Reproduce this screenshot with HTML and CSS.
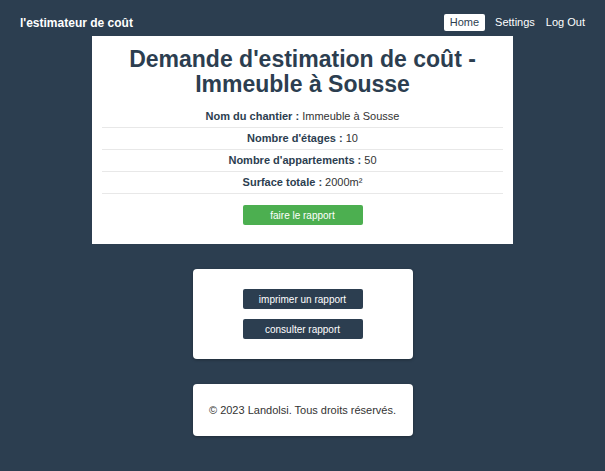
FILE: index.html
```html
<!DOCTYPE html>
<html lang="fr">
<head>
<meta charset="utf-8">
<title>l'estimateur de coût</title>
<link rel="stylesheet" href="styles.css">
</head>
<body>
<header class="navbar">
  <div class="brand">l'estimateur de coût</div>
  <nav class="nav">
    <a class="nav-link active" href="#">Home</a>
    <a class="nav-link" href="#">Settings</a>
    <a class="nav-link" href="#">Log Out</a>
  </nav>
</header>
<main class="content">
  <section class="card main-card">
    <h1 class="title">Demande d'estimation de coût - Immeuble à Sousse</h1>
    <ul class="details">
      <li class="row"><strong>Nom du chantier :</strong> Immeuble à Sousse</li>
      <li class="row"><strong>Nombre d'étages :</strong> 10</li>
      <li class="row"><strong>Nombre d'appartements :</strong> 50</li>
      <li class="row"><strong>Surface totale :</strong> 2000m²</li>
    </ul>
    <button class="btn btn-green">faire le rapport</button>
  </section>
  <section class="card small-card actions">
    <button class="btn btn-dark">imprimer un rapport</button>
    <button class="btn btn-dark">consulter rapport</button>
  </section>
  <footer class="card small-card footer">© 2023 Landolsi. Tous droits réservés.</footer>
</main>
</body>
</html>
```
FILE: styles.css
```css
* { box-sizing: border-box; }
html, body { margin: 0; }
body {
  background: #2c3e50;
  font-family: "Liberation Sans", Arial, sans-serif;
  color: #333;
  min-height: 471px;
}
.navbar {
  display: flex;
  justify-content: space-between;
  align-items: center;
  padding: 14px 20px 5px 20px;
  height: 36px;
}
.brand {
  color: #fff;
  font-weight: bold;
  font-size: 12px;
}
.nav {
  display: flex;
  align-items: center;
  gap: 11px;
}
.nav-link {
  color: #fff;
  text-decoration: none;
  font-size: 11px;
  line-height: 13px;
}
.nav-link.active {
  background: #fff;
  color: #2c3e50;
  padding: 2px 6px;
  margin-right: -1px;
  border-radius: 2px;
}
.content {
  display: flex;
  flex-direction: column;
  align-items: center;
  gap: 25px;
}
.card {
  background: #fff;
}
.main-card {
  width: 421px;
  padding: 8px 10px 19px;
  display: flex;
  flex-direction: column;
  align-items: center;
}
.title {
  margin: 0;
  color: #2c3e50;
  font-size: 23px;
  line-height: 25px;
  text-align: center;
  padding: 3px 0 0;
}
.details {
  list-style: none;
  margin: 9px 0 0;
  padding: 0;
  width: 100%;
}
.row {
  height: 22px;
  line-height: 21px;
  border-bottom: 1px solid #e8e8e8;
  text-align: center;
  font-size: 11px;
  color: #333;
}
.row strong { color: #2c3e50; }
.btn {
  width: 120px;
  height: 20px;
  border: none;
  border-radius: 2px;
  color: #fff;
  font-family: "Liberation Sans", Arial, sans-serif;
  font-size: 10px;
  padding: 0;
}
.btn-green {
  background: #4caf50;
  margin-top: 11px;
}
.btn-dark { background: #2c3e50; }
.small-card {
  width: 220px;
  border-radius: 4px;
  box-shadow: 0 1px 3px rgba(0,0,0,0.3);
}
.actions {
  padding: 20px 0;
  display: flex;
  flex-direction: column;
  align-items: center;
  gap: 10px;
}
.footer {
  height: 52px;
  display: flex;
  align-items: center;
  justify-content: center;
  font-size: 11px;
  color: #333;
}
```
